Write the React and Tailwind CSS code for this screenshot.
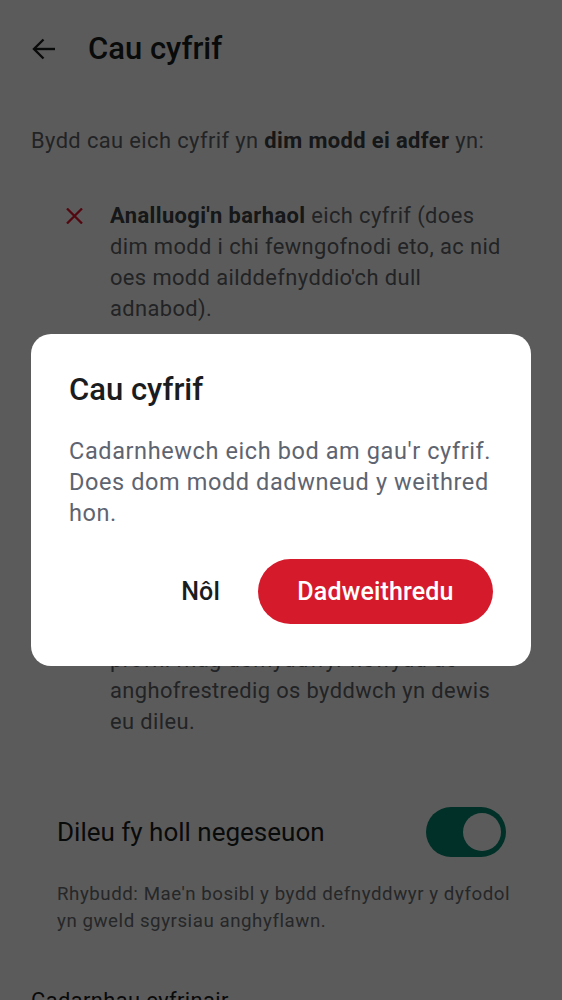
import React from "react";

function BackArrow() {
  return (
    <svg width="25" height="24" viewBox="0 0 25 24" fill="none" stroke="#1b1c1e" strokeWidth="2.4" strokeLinecap="butt" strokeLinejoin="miter">
      <path d="M24 12H3" />
      <path d="M12.5 2.5L3 12l9.5 9.5" />
    </svg>
  );
}

function XMark() {
  return (
    <svg width="17" height="16" viewBox="0 0 17 16" stroke="#e8142c" strokeWidth="2.3" strokeLinecap="butt">
      <path d="M1 0.5l15 15M16 0.5l-15 15" />
    </svg>
  );
}

function Item({ children }) {
  return (
    <li className="flex">
      <div className="w-[79px] shrink-0 pl-[35px] pt-[8px]">
        <XMark />
      </div>
      <div className="w-[395px] text-[21.9px] leading-[31px] tracking-[0.39px] text-[#5f6368]">{children}</div>
    </li>
  );
}

export default function App() {
  return (
    <div className="relative min-h-[1100px] bg-white" style={{ fontFamily: "Roboto, 'Noto Sans', sans-serif" }}>
      <header className="flex h-[98px] items-center px-[31px]">
        <BackArrow />
        <h1 className="ml-[32px] text-[31px] font-medium leading-[40px] text-[#1b1c1e]">Cau cyfrif</h1>
      </header>

      <div className="px-[31px]">
        <p className="mt-[27px] text-[21.9px] leading-[31px] tracking-[0.39px] text-[#5f6368]">
          Bydd cau eich cyfrif yn <span className="font-bold text-[#3c4043]">dim modd ei adfer</span> yn:
        </p>

        <ul className="mt-[44px] flex flex-col gap-[44.5px]">
          <Item>
            <span className="font-bold text-[#3c4043]">Analluogi'n barhaol</span> eich cyfrif (does dim modd i chi fewngofnodi eto, ac nid oes modd ailddefnyddio'ch dull adnabod).
          </Item>
          <Item>
            Dileu eich holl ddata personol,
            <br />
            gan gynnwys eich enw a'ch llun
            <br />
            proffil.
          </Item>
          <Item>
            Eich tynnu o bob grŵp a sgwrs
            <br />
            rydych chi'n aelod ohonynt.
          </Item>
          <Item>
            Cuddio'ch negeseuon a'ch llun
            <br />
            proffil rhag defnyddwyr newydd ac
            <br />
            anghofrestredig os byddwch yn dewis eu dileu.
          </Item>
        </ul>

        <div className="mt-[70px] flex h-[50px] items-center justify-between pl-[26px] pr-[25px]">
          <span className="text-[26px] leading-[34px] text-[#1b1c1e]">Dileu fy holl negeseuon</span>
          <div className="flex h-[50px] w-[80px] items-center justify-end rounded-full bg-[#00866d] pr-[5px]">
            <div className="h-[38px] w-[38px] rounded-full bg-white" />
          </div>
        </div>
        <p className="mt-[24.5px] pl-[26px] text-[18.7px] leading-[26.7px] tracking-[0.55px] text-[#6b6e72]">
          Rhybudd: Mae'n bosibl y bydd defnyddwyr y dyfodol yn gweld sgyrsiau anghyflawn.
        </p>

        <p className="mt-[50.5px] text-[21.9px] leading-[31px] tracking-[0.39px] text-[#1b1c1e]">Cadarnhau cyfrinair</p>
      </div>

      <div className="fixed inset-0 flex items-center justify-center bg-black/[0.643] px-[31px]">
        <div className="w-full rounded-[20px] bg-white px-[38px] pb-[42px] pt-[36px]">
          <h2 className="text-[31px] font-medium leading-[40px] text-[#1b1c1e]">Cau cyfrif</h2>
          <p className="mt-[26px] text-[23.5px] leading-[31px] tracking-[0.6px] text-[#5e6470]">
            Cadarnhewch eich bod am gau'r cyfrif. Does dom modd dadwneud y weithred hon.
          </p>
          <div className="mt-[30px] flex items-center justify-end">
            <button className="h-[65px] px-[38px] text-[25px] font-medium tracking-[0.16px] text-[#1b1c1e]">Nôl</button>
            <button className="h-[65px] w-[235px] rounded-full bg-[#d51a2b] text-[25px] font-medium tracking-[0.16px] text-white">Dadweithredu</button>
          </div>
        </div>
      </div>
    </div>
  );
}
